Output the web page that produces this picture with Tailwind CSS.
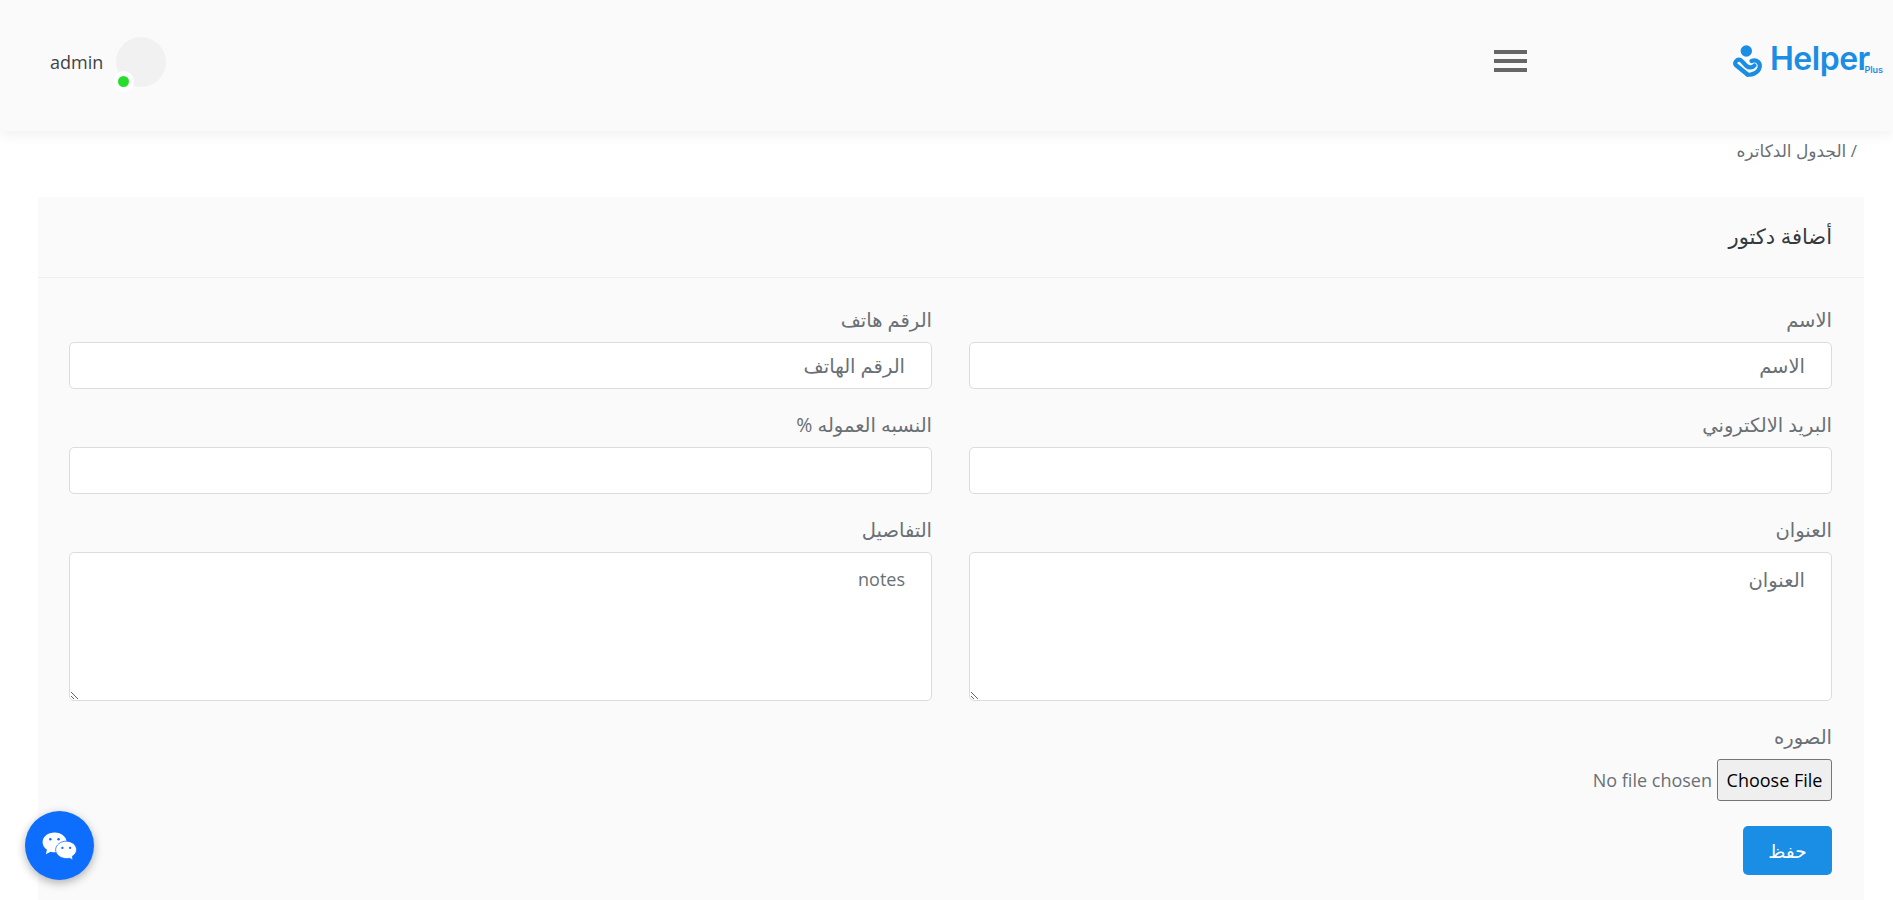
<!DOCTYPE html>
<html lang="ar">
<head>
    <meta charset="UTF-8">
    <meta name="viewport" content="width=device-width, initial-scale=1.0">
    <title>Helper Plus</title>
    <script src="https://cdn.jsdelivr.net/npm/@tailwindcss/browser@4"></script>
</head>
<body class="bg-white text-[#6a7075] font-['Open_Sans','DejaVu_Sans',sans-serif] h-[900px] overflow-hidden">

    <!-- Header -->
    <header dir="ltr" class="relative z-10 h-[131px] bg-[#fafafa] shadow-[0_4px_12px_rgba(0,0,0,0.06)] flex items-start">
        <div class="flex items-center pl-[50px] pt-[37px]">
            <span class="text-[18px] text-[#3f4347] mr-[13px]">admin</span>
            <div class="relative w-[50px] h-[50px] rounded-full bg-[#f1f1f1]">
                <span class="absolute left-[-3px] top-[34px] w-[21px] h-[21px] rounded-full bg-white flex items-center justify-center">
                    <span class="w-[11px] h-[11px] rounded-full bg-[#27dd2d]"></span>
                </span>
            </div>
        </div>
        <div class="ml-auto flex items-start">
            <!-- Menu toggle -->
            <div class="mt-[50px] w-[33px] flex flex-col gap-[5px]">
                <span class="h-[4px] bg-[#666]"></span>
                <span class="h-[4px] bg-[#666]"></span>
                <span class="h-[4px] bg-[#666]"></span>
            </div>
            <!-- Logo -->
            <div class="relative w-[154px] h-[38px] ml-[201px] mr-[11px] mt-[42px] flex items-start text-[#1a8de4]">
                <svg class="w-[40px] h-[38px] shrink-0" viewBox="0 0 40 38" fill="none" stroke="currentColor" stroke-width="4.200" stroke-linecap="round" stroke-linejoin="round">
                    <circle cx="18.300" cy="9" r="5.700" fill="currentColor" stroke="none"/>
                    <path d="M19.500 32.500 L7.800 23 C6 20.500 9 16.500 12.500 18 C15 19.500 16 22 18.500 24 C21 26 24.500 26 26.500 23.500"/>
                    <path d="M19.500 32.500 C23 33.500 30 31 31.500 26 C33 21 29 17 23.500 19"/>
                </svg>
                <span class="ml-[2px] text-[32px] leading-[34px] font-semibold tracking-[-0.5px] font-['Inter',sans-serif]">Helper</span>
                <span class="absolute right-[-1px] top-[22px] text-[9px] leading-[12px] font-semibold font-['Inter',sans-serif]">Plus</span>
            </div>
        </div>
    </header>

    <main dir="rtl">
        <!-- Breadcrumb -->
        <nav class="h-[66px] pr-[36px] pt-[10px] text-[17px] leading-[20px]">/ الجدول الدكاتره</nav>

        <!-- Card -->
        <section class="ml-[38px] mr-[29px] bg-[#fafafa] h-[703px]">
            <div class="h-[81px] px-[32px] flex items-center border-b border-[#f0f0f0]">
                <h1 class="text-[21px] text-[#343a40]">أضافة دكتور</h1>
            </div>
            <form class="pr-[32px] pl-[31px] pt-[28px]">
                <div class="grid grid-cols-2 gap-x-[37px]">
                    <div class="mb-[22px]">
                        <label class="block text-[19.500px] leading-[27px] mb-[9px]">الاسم</label>
                        <input type="text" placeholder="الاسم" class="block w-full h-[47px] px-[26px] bg-white border border-[#dcdcdc] rounded-[5px] text-[19.500px] placeholder:text-[#6a7075]">
                    </div>
                    <div class="mb-[22px]">
                        <label class="block text-[19.500px] leading-[27px] mb-[9px]">الرقم هاتف</label>
                        <input type="text" placeholder="الرقم الهاتف" class="block w-full h-[47px] px-[26px] bg-white border border-[#dcdcdc] rounded-[5px] text-[19.500px] placeholder:text-[#6a7075]">
                    </div>
                    <div class="mb-[22px]">
                        <label class="block text-[19.500px] leading-[27px] mb-[9px]">البريد الالكتروني</label>
                        <input type="email" class="block w-full h-[47px] px-[26px] bg-white border border-[#dcdcdc] rounded-[5px] text-[19.500px]">
                    </div>
                    <div class="mb-[22px]">
                        <label class="block text-[19.500px] leading-[27px] mb-[9px]">النسبه العموله %</label>
                        <input type="text" class="block w-full h-[47px] px-[26px] bg-white border border-[#dcdcdc] rounded-[5px] text-[19.500px]">
                    </div>
                    <div class="mb-[22px]">
                        <label class="block text-[19.500px] leading-[27px] mb-[9px]">العنوان</label>
                        <textarea placeholder="العنوان" class="block w-full h-[149px] px-[26px] py-[13px] bg-white border border-[#dcdcdc] rounded-[5px] text-[19.500px] leading-[27px] placeholder:text-[#6a7075]"></textarea>
                    </div>
                    <div class="mb-[22px]">
                        <label class="block text-[19.500px] leading-[27px] mb-[9px]">التفاصيل</label>
                        <textarea placeholder="notes" class="block w-full h-[149px] px-[26px] py-[13px] bg-white border border-[#dcdcdc] rounded-[5px] text-[18px] leading-[27px] placeholder:text-[#6a7075]"></textarea>
                    </div>
                </div>
                <div class="mb-[25px]">
                    <label class="block text-[19.500px] leading-[27px] mb-[9px]">الصوره</label>
                    <div class="flex items-center h-[42px]">
                        <button type="button" class="h-[42px] w-[115px] bg-[#efefef] border border-[#767676] rounded-[3px] text-[18px] text-black">Choose File</button>
                        <span dir="ltr" class="mr-[5px] text-[18px]">No file chosen</span>
                    </div>
                </div>
                <button type="button" class="block w-[89px] h-[49px] bg-[#1a8de4] rounded-[5px] text-white text-[18.500px]">حفظ</button>
            </form>
        </section>
    </main>

    <!-- Chat bubble -->
    <button type="button" class="fixed left-[25px] top-[811px] z-20 w-[69px] h-[69px] rounded-full bg-[#0d6efd] shadow-[0_3px_10px_rgba(0,0,0,0.3)] flex items-center justify-center">
        <svg class="w-[35px] h-[28px]" viewBox="0 0 36 29">
            <path d="M13 .5C6 .5.500 4.800.500 10.500c0 3.300 1.800 6 4.500 7.800L3.800 23l5-2.500c1.300.4 2.700.6 4.200.6 7 0 12.500-4.600 12.500-10.300S20 .5 13 .5z" fill="#fff"/>
            <circle cx="8.500" cy="7.500" r="1.300" fill="#0d6efd"/><circle cx="17" cy="7.500" r="1.300" fill="#0d6efd"/>
            <path d="M25 9.500c-6 0-11 4-11 9s5 9 11 9c1.100 0 2.200-.1 3.200-.4L32 29l-.8-3.800c2.800-1.700 4.500-4 4.500-6.700 0-5-4.700-9-10.700-9z" fill="#fff" stroke="#0d6efd" stroke-width=".8"/>
            <circle cx="21" cy="16.500" r="1.200" fill="#0d6efd"/><circle cx="29" cy="16.500" r="1.200" fill="#0d6efd"/>
        </svg>
    </button>
</body>
</html>
